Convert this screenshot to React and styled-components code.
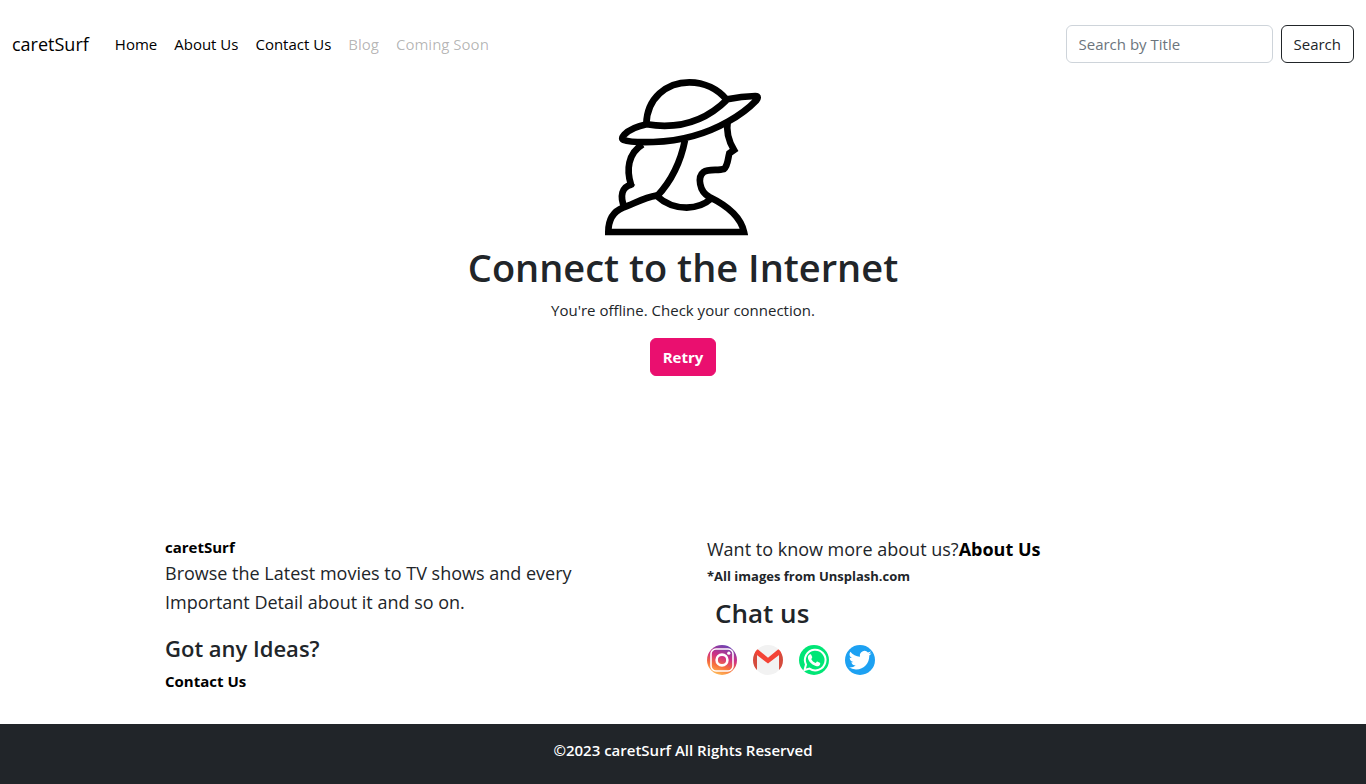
import React from "react";
import styled, { createGlobalStyle } from "styled-components";

const GlobalStyle = createGlobalStyle`
  *, *::before, *::after { box-sizing: border-box; }
  body {
    margin: 0;
    background: #fff;
    color: #212529;
    font-family: "Segoe UI", "Open Sans", "Noto Sans", sans-serif;
    font-size: 15px;
    line-height: 24px;
  }
  h1, h2, h3, p, ul { margin: 0; padding: 0; }
  a { color: #000; text-decoration: none; }
  button, input { font: inherit; }
`;

const Page = styled.div`
  display: flex;
  flex-direction: column;
  min-height: 100vh;
`;

const Navbar = styled.nav`
  display: flex;
  align-items: center;
  justify-content: space-between;
  flex-wrap: wrap;
  gap: 8px;
  padding: 25px 12px 14px;
`;

const NavGroup = styled.div`
  display: flex;
  align-items: center;
  gap: 26px;
`;

const Brand = styled.a`
  font-size: 18px;
  line-height: 30px;
`;

const NavList = styled.ul`
  display: flex;
  gap: 17px;
  list-style: none;
`;

const NavLink = styled.a`
  color: ${(p) => (p.$disabled ? "rgba(0, 0, 0, 0.3)" : "#000")};
`;

const SearchForm = styled.form`
  display: flex;
  gap: 8px;
`;

const SearchInput = styled.input`
  width: 207px;
  height: 38px;
  padding: 6px 12px;
  border: 1px solid #ced4da;
  border-radius: 6px;
  color: #212529;
  &::placeholder { color: #6c757d; opacity: 1; }
`;

const Button = styled.button`
  height: 38px;
  padding: 0 12px;
  border: 1px solid ${(p) => (p.$primary ? "#ea0f6f" : "#212529")};
  border-radius: 6px;
  background: ${(p) => (p.$primary ? "#ea0f6f" : "#fff")};
  color: ${(p) => (p.$primary ? "#fff" : "#212529")};
  font-weight: ${(p) => (p.$primary ? 700 : 400)};
  cursor: pointer;
`;

const Main = styled.main`
  flex: 1;
  display: flex;
  flex-direction: column;
  align-items: center;
  text-align: center;
`;

const Title = styled.h1`
  margin-top: 6px;
  font-size: 38px;
  line-height: 48px;
  font-weight: 600;
`;

const Message = styled.p`
  margin: 7px 0 16px;
`;

const Info = styled.section`
  display: grid;
  grid-template-columns: 1fr 1fr;
  gap: 48px;
  width: 100%;
  max-width: 1036px;
  margin: 0 auto;
  padding: 24px 0 31px;
`;

const Column = styled.div`
  display: flex;
  flex-direction: column;
  align-items: flex-start;
`;

const StrongLink = styled.a`
  font-weight: 700;
`;

const Lead = styled.p`
  font-size: 18px;
  line-height: 29px;
`;

const Subtitle = styled.h2`
  margin: ${(p) => (p.$indent ? "10px 8px 17px" : "16px 0 6px")};
  font-size: ${(p) => (p.$indent ? 26 : 22)}px;
  line-height: 30px;
  font-weight: 600;
`;

const Note = styled.p`
  font-size: 13px;
  font-weight: 700;
`;

const Socials = styled.div`
  display: flex;
  gap: 16px;
  a, svg { display: block; }
`;

const Copyright = styled.footer`
  padding: 14px 16px 22px;
  background: #212529;
  color: #fff;
  text-align: center;
  font-weight: 600;
`;

const Lady = () => (
  <svg width="160" height="160" viewBox="39 21 480 480" fill="none" stroke="#000" strokeWidth="20" strokeLinejoin="miter" aria-hidden="true">
    <path d="M169 162C171 85 229 37 298 37C344 37 384 58 410 89" />
    <path d="M170 163C274 180 354 146 412 88C442 82 470 79 496 78C507 78 503 86 499 91C475 116 446 137 415 154C347 193 272 213 190 216C154 217 118 217 101 210C93 206 98 200 103 194C119 178 145 168 170 163Z" />
    <path d="M413 154C408 184 416 213 432 240L418 250C413 268 414 287 402 297C384 302 355 297 341 306C322 320 327 364 358 381C412 407 452 439 462 486H55C55 448 69 425 99 413C132 401 165 382 199 377C225 401 255 413 290 413C319 412 344 404 363 386" />
    <path d="M285 210C272 276 246 331 201 379" />
    <path d="M158 223C113 250 109 301 123 344C96 350 88 379 104 414" strokeLinejoin="round" />
    <path d="M122 336L136 345L122 352Z" fill="#000" stroke="none" />
  </svg>
);

const Instagram = () => (
  <svg width="30" height="30" viewBox="0 0 30 30" aria-hidden="true">
    <defs>
      <linearGradient id="ig" x1="0.3" y1="1" x2="0.65" y2="0">
        <stop offset="0" stopColor="#ffc15a" />
        <stop offset="0.3" stopColor="#f8703c" />
        <stop offset="0.6" stopColor="#cf3184" />
        <stop offset="1" stopColor="#6a45b5" />
      </linearGradient>
    </defs>
    <circle cx="15" cy="15" r="15" fill="url(#ig)" />
    <g fill="none" stroke="#fff">
      <rect x="4" y="4" width="22" height="22" rx="5" strokeWidth="1.6" />
      <circle cx="15" cy="15" r="5.4" strokeWidth="2.6" />
    </g>
    <circle cx="21.8" cy="8.2" r="1.6" fill="#fff" />
  </svg>
);

const Gmail = () => (
  <svg width="30" height="30" viewBox="0 0 30 30" aria-hidden="true">
    <defs>
      <clipPath id="gm"><circle cx="15" cy="15" r="15" /></clipPath>
    </defs>
    <g clipPath="url(#gm)">
      <path fill="#f2f2f2" d="M0 0H30V30H0Z" />
      <path fill="#d54b3d" d="M0 4H4V27H0ZM26 4H30V27H26Z" />
      <path fill="#f44336" d="M0 7L2 3.5Q3.500 3 5 4.500L15 12.800L25 4.500Q26.500 3 28 3.500L30 7L15 18.500Z" />
    </g>
  </svg>
);

const WhatsApp = () => (
  <svg width="30" height="30" viewBox="0 0 30 30" aria-hidden="true">
    <circle cx="15" cy="15" r="15" fill="#00e676" />
    <path d="M5.500 25L7 19.600A10.300 10.300 0 1 1 10.500 23.600Z" fill="none" stroke="#fff" strokeWidth="2" />
    <path fill="#fff" d="M11.200 9.200C11.700 9.200 12 9.300 12.200 9.800L13.200 12.100C13.300 12.500 13.200 12.800 12.900 13.200L12.200 14C13.200 16 14.500 17.100 16.600 18L17.600 16.900C17.900 16.500 18.200 16.500 18.700 16.700L20.800 17.700C21.300 18 21.300 18.300 21.200 18.900C20.900 20.400 19.300 21.400 17.700 21.200C13.500 20.600 9.300 16.500 8.900 12.800C8.800 11.400 9.500 9.800 11.200 9.200Z" />
  </svg>
);

const Twitter = () => (
  <svg width="30" height="30" viewBox="0 0 30 30" aria-hidden="true">
    <circle cx="15" cy="15" r="15" fill="#1da1f2" />
    <path fill="#fff" transform="translate(3.800 3.800) scale(0.950)" d="M23.950 4.570a10 10 0 0 1-2.820.775 4.960 4.960 0 0 0 2.160-2.720 9.900 9.900 0 0 1-3.120 1.190 4.920 4.920 0 0 0-8.390 4.480C7.690 8.090 4.070 6.130 1.640 3.160a4.920 4.920 0 0 0 1.520 6.570 4.900 4.900 0 0 1-2.230-.610v.060a4.920 4.920 0 0 0 3.950 4.830 5 5 0 0 1-2.210.080 4.940 4.940 0 0 0 4.600 3.420A9.870 9.870 0 0 1 0 19.540a14 14 0 0 0 7.550 2.210c9.050 0 14-7.500 14-13.980 0-.210 0-.420-.015-.630a9.940 9.940 0 0 0 2.460-2.550z" />
  </svg>
);

const links = [
  { label: "Home" },
  { label: "About Us" },
  { label: "Contact Us" },
  { label: "Blog", disabled: true },
  { label: "Coming Soon", disabled: true },
];

const socials = [
  { name: "Instagram", Icon: Instagram },
  { name: "Gmail", Icon: Gmail },
  { name: "WhatsApp", Icon: WhatsApp },
  { name: "Twitter", Icon: Twitter },
];

export default function App() {
  return (
    <Page>
      <GlobalStyle />
      <Navbar>
        <NavGroup>
          <Brand href="#">caretSurf</Brand>
          <NavList>
            {links.map((l) => (
              <li key={l.label}>
                <NavLink href="#" $disabled={l.disabled} aria-disabled={l.disabled}>{l.label}</NavLink>
              </li>
            ))}
          </NavList>
        </NavGroup>
        <SearchForm role="search" onSubmit={(e) => e.preventDefault()}>
          <SearchInput type="search" placeholder="Search by Title" aria-label="Search by Title" />
          <Button type="submit">Search</Button>
        </SearchForm>
      </Navbar>

      <Main>
        <Lady />
        <Title>Connect to the Internet</Title>
        <Message>You're offline. Check your connection.</Message>
        <Button type="button" $primary>Retry</Button>
      </Main>

      <Info>
        <Column>
          <StrongLink href="#">caretSurf</StrongLink>
          <Lead>Browse the Latest movies to TV shows and every Important Detail about it and so on.</Lead>
          <Subtitle>Got any Ideas?</Subtitle>
          <StrongLink href="#">Contact Us</StrongLink>
        </Column>
        <Column>
          <Lead>Want to know more about us?<StrongLink href="#">About Us</StrongLink></Lead>
          <Note>*All images from Unsplash.com</Note>
          <Subtitle $indent>Chat us</Subtitle>
          <Socials>
            {socials.map(({ name, Icon }) => (
              <a key={name} href="#" aria-label={name}><Icon /></a>
            ))}
          </Socials>
        </Column>
      </Info>

      <Copyright>©2023 caretSurf All Rights Reserved</Copyright>
    </Page>
  );
}
